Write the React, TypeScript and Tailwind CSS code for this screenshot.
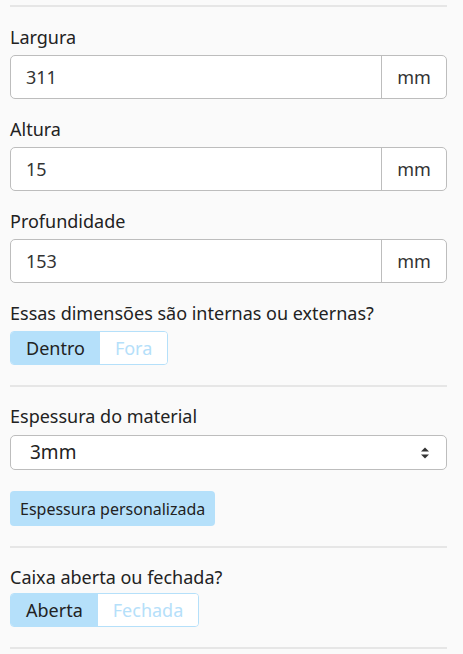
import React from 'react';

const font = { fontFamily: '"Noto Sans", "Open Sans", sans-serif' };

const Divider = () => <hr className="border-0 border-t-2 border-[#e6e6e6]" />;

const DimInput = ({ label, value }: { label: string; value: string }) => (
  <div className="flex flex-col gap-[6px]">
    <label className="text-[18px] leading-6 text-[#222]">{label}</label>
    <div className="flex h-[44px] rounded-[5px] border border-[#bdbdbd] bg-white">
      <input
        readOnly
        value={value}
        className="min-w-0 flex-1 bg-transparent px-[15px] text-[18px] text-[#333] outline-none"
      />
      <span className="flex w-[65px] items-center justify-center border-l border-[#bdbdbd] text-[18px] text-[#333]">
        mm
      </span>
    </div>
  </div>
);

const Toggle = ({ on, off }: { on: string; off: string }) => (
  <div className="flex w-fit overflow-hidden rounded-[4px] border border-[#b5e0fa]">
    <button className="bg-[#b5e0fa] px-[15px] h-[32px] text-[18px] text-[#222]">{on}</button>
    <button className="bg-white px-[15px] h-[32px] text-[18px] text-[#b5e0fa]">{off}</button>
  </div>
);

export default function App() {
  return (
    <div className="min-h-screen bg-[#fafafa] pl-[10px] pr-[16px] pt-[5px]" style={font}>
      <Divider />
      <div className="flex flex-col gap-[18px] pt-[18px]">
        <DimInput label="Largura" value="311" />
        <DimInput label="Altura" value="15" />
        <DimInput label="Profundidade" value="153" />
        <div className="flex flex-col gap-[6px]">
          <label className="text-[18px] leading-6 text-[#222]">Essas dimensões são internas ou externas?</label>
          <Toggle on="Dentro" off="Fora" />
        </div>
      </div>
      <div className="pt-[20px]">
        <Divider />
      </div>
      <div className="flex flex-col pt-[17px]">
        <label className="text-[18px] leading-6 text-[#222]">Espessura do material</label>
        <div className="mt-[7px] flex h-[35px] items-center justify-between rounded-[5px] border border-[#bdbdbd] bg-white pl-[19px] pr-[16px]">
          <span className="text-[19px] text-[#222]">3mm</span>
          <svg width="10" height="14" viewBox="0 0 10 14" className="text-[#333]">
            <path d="M1 5.5L5 1.5L9 5.5Z" fill="currentColor" />
            <path d="M1 8.5L5 12.5L9 8.5Z" fill="currentColor" />
          </svg>
        </div>
        <button className="mt-[21px] h-[35px] w-fit rounded-[4px] bg-[#b5e0fa] px-[10px] text-[16px] text-[#222]">
          Espessura personalizada
        </button>
      </div>
      <div className="pt-[20px]">
        <Divider />
      </div>
      <div className="flex flex-col gap-[4px] pt-[17px]">
        <label className="text-[18px] leading-6 text-[#222]">Caixa aberta ou fechada?</label>
        <Toggle on="Aberta" off="Fechada" />
      </div>
      <div className="pt-[20px]">
        <Divider />
      </div>
    </div>
  );
}
